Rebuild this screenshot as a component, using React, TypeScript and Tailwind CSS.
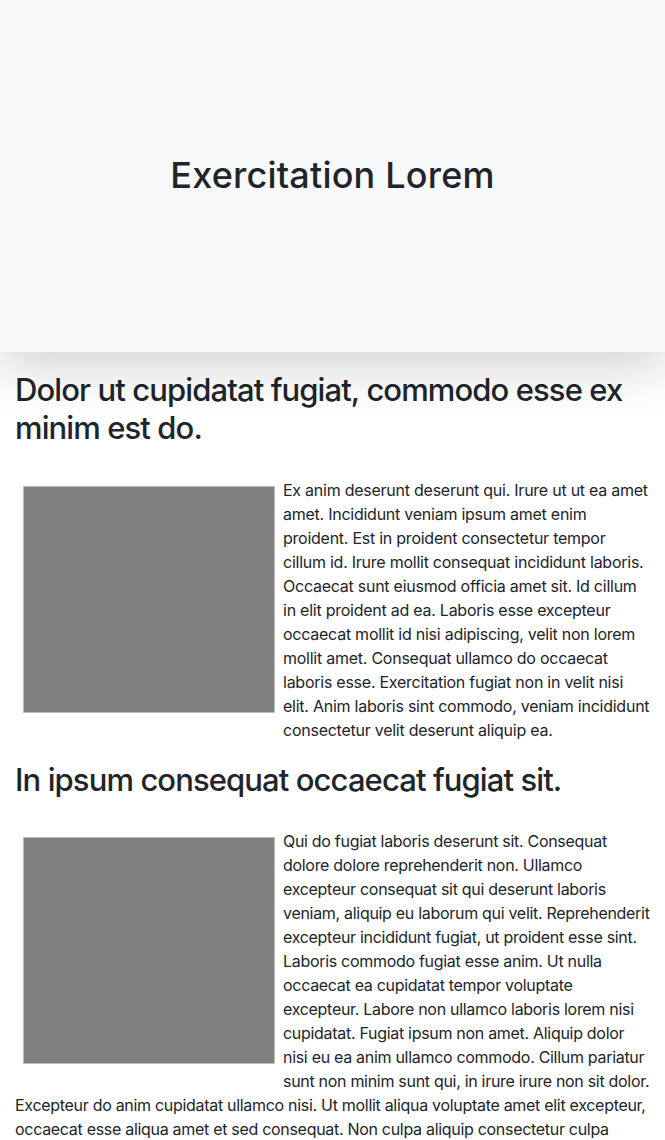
import React from "react";

function Block({ text, tracking }: { text: string; tracking: string }) {
  return (
    <p className={`mb-4 text-base leading-6 ${tracking}`}>
      <span className="float-left m-2 block h-[227px] w-[252px] border border-[#bdbdbd] bg-[#808080]" />
      {text}
    </p>
  );
}

export default function App() {
  return (
    <div className="min-h-[1140px] bg-white text-[#212529]" style={{ fontFamily: "Inter, 'Noto Sans', sans-serif" }}>
      <header className="relative z-10 flex h-[352px] items-center justify-center bg-[#f8f9fa] shadow-[0_1rem_3rem_rgba(0,0,0,0.175)]">
        <h1 className="text-[36px] font-medium leading-[1.2] tracking-[0.2px]">Exercitation Lorem</h1>
      </header>
      <main className="px-[15px]">
        <h2 className="mt-[19px] mb-[30px] text-[31px] font-medium leading-[38.4px] tracking-[-0.9px]">
          Dolor ut cupidatat fugiat, commodo esse ex minim est do.
        </h2>
        <Block
          tracking="tracking-[-0.25px]"
          text="Ex anim deserunt deserunt qui. Irure ut ut ea amet amet. Incididunt veniam ipsum amet enim proident. Est in proident consectetur tempor cillum id. Irure mollit consequat incididunt laboris. Occaecat sunt eiusmod officia amet sit. Id cillum in elit proident ad ea. Laboris esse excepteur occaecat mollit id nisi adipiscing, velit non lorem mollit amet. Consequat ullamco do occaecat laboris esse. Exercitation fugiat non in velit nisi elit. Anim laboris sint commodo, veniam incididunt consectetur velit deserunt aliquip ea."
        />
        <h2 className="clear-both mt-[19px] mb-[30px] text-[31px] font-medium leading-[38.4px] tracking-[-0.9px]">
          In ipsum consequat occaecat fugiat sit.
        </h2>
        <Block
          tracking="tracking-[-0.3px]"
          text="Qui do fugiat laboris deserunt sit. Consequat dolore dolore reprehenderit non. Ullamco excepteur consequat sit qui deserunt laboris veniam, aliquip eu laborum qui velit. Reprehenderit excepteur incididunt fugiat, ut proident esse sint. Laboris commodo fugiat esse anim. Ut nulla occaecat ea cupidatat tempor voluptate excepteur. Labore non ullamco laboris lorem nisi cupidatat. Fugiat ipsum non amet. Aliquip dolor nisi eu ea anim ullamco commodo. Cillum pariatur sunt non minim sunt qui, in irure irure non sit dolor. Excepteur do anim cupidatat ullamco nisi. Ut mollit aliqua voluptate amet elit excepteur, occaecat esse aliqua amet et sed consequat. Non culpa aliquip consectetur culpa"
        />
      </main>
    </div>
  );
}
